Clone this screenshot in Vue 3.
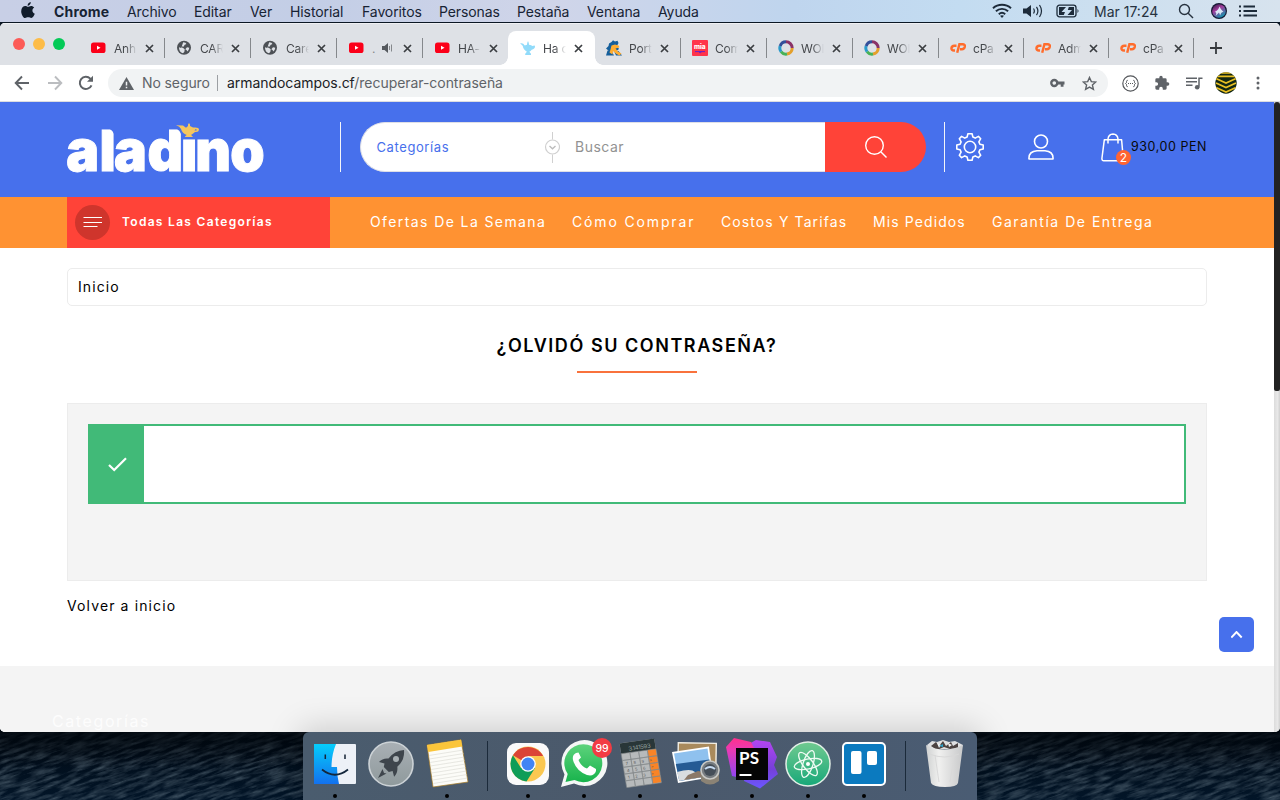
<script setup>
const menus = [
  { t: 'Archivo', w: 67 }, { t: 'Editar', w: 56 }, { t: 'Ver', w: 40 }, { t: 'Historial', w: 72 },
  { t: 'Favoritos', w: 77 }, { t: 'Personas', w: 78 }, { t: 'Pestaña', w: 70 }, { t: 'Ventana', w: 71 }, { t: 'Ayuda', w: 60 }
]
const tabs = [
  { t: 'Anh', i: 'yt' }, { t: 'CAR', i: 'globe' }, { t: 'Care', i: 'globe' }, { t: '.', i: 'yt', sound: true },
  { t: 'HA-', i: 'yt', nosep: true }, { t: 'Ha c', i: 'lamp', active: true }, { t: 'Port', i: 'goat' },
  { t: 'Com', i: 'mia' }, { t: 'WOI', i: 'ring' }, { t: 'WOI', i: 'ring' },
  { t: 'cPa', i: 'cp' }, { t: 'Adm', i: 'cp' }, { t: 'cPa', i: 'cp' }
]
const links = [
  { t: 'Ofertas De La Semana', w: 202, c: 'l1' }, { t: 'Cómo Comprar', w: 149, c: 'l2' },
  { t: 'Costos Y Tarifas', w: 152, c: 'l3' }, { t: 'Mis Pedidos', w: 119, c: 'l4' }, { t: 'Garantía De Entrega', w: 180, c: 'l5' }
]
const calcRows = [0, 1, 2, 3, 4]
const calcCols = [0, 1, 2, 3]
</script>

<template>
  <div class="desktop">
    <svg class="sea" width="1280" height="80" viewBox="0 0 1280 80">
      <defs>
        <filter id="waves" x="0" y="0" width="100%" height="100%">
          <feTurbulence type="fractalNoise" baseFrequency="0.05 0.3" numOctaves="4" seed="8" />
          <feColorMatrix values="0 0 0 0 0.15  0 0 0 0 0.21  0 0 0 0 0.26  1.1 0 0 0 -0.4" />
        </filter>
        <linearGradient id="deep" x1="0" y1="0" x2="0" y2="1">
          <stop offset="0" stop-color="#010a12" /><stop offset=".35" stop-color="#010c18" /><stop offset="1" stop-color="#021528" />
        </linearGradient>
        <linearGradient id="shade" x1="0" y1="0" x2="0" y2="1">
          <stop offset=".15" stop-color="#00060c" stop-opacity=".75" /><stop offset=".6" stop-color="#00060c" stop-opacity="0" />
        </linearGradient>
      </defs>
      <rect width="1280" height="80" fill="url(#deep)" />
      <rect x="-100" y="-500" width="1500" height="1100" filter="url(#waves)" transform="rotate(-18 640 40)" />
      <rect width="1280" height="80" fill="url(#shade)" />
    </svg>

    <div class="menubar">
      <svg class="apple" width="14" height="17" viewBox="0 0 14 17"><path fill="#111c2b" d="M9.8 0c.1 1.9-1.400 3.700-3.200 3.700C6.400 2 8 .2 9.800 0zM7 4.800c.7 0 1.700-.9 3.100-.9 1.200 0 2.400.6 3.100 1.600-2.700 1.600-2.200 5.200.6 6.300-.6 1.700-2 4.200-3.500 4.200-1.200 0-1.600-.7-3.100-.7s-2 .7-3.100.7C2.200 16 .2 12.300.2 9.200c0-3.300 2.100-5.200 4.200-5.200 1.200 0 2 .8 2.600.8z" /></svg>
      <b class="app-name">Chrome</b>
      <span v-for="m in menus" :key="m.t" class="menu" :style="{ width: m.w + 'px' }">{{ m.t }}</span>
      <div class="status">
        <svg width="20" height="16" viewBox="0 0 20 16" fill="none" stroke="#1d2b3a" stroke-width="1.900"><path d="M1 5.200C6 .6 14 .6 19 5.200M3.900 8.300c3.500-3.300 8.700-3.300 12.200 0M6.800 11.300c2-1.800 4.400-1.800 6.400 0" /><path d="M10 15l-2-2.200c1-.9 3-.9 4 0z" fill="#1d2b3a" stroke="none" /></svg>
        <svg class="vol" width="22" height="14" viewBox="0 0 22 14"><path fill="#1d2b3a" d="M1 4.500h3.500L9 1v12L4.500 9.500H1z" /><path d="M11.500 4.500q1.700 2.500 0 5M14.500 2.800q2.800 4.200 0 8.400M17.500 1q4 6 0 12" fill="none" stroke="#1d2b3a" stroke-width="1.200" /></svg>
        <svg class="bat" width="24" height="14" viewBox="0 0 24 14"><rect x="1" y="1.200" width="19" height="11.600" rx="2.500" fill="none" stroke="#1d2b3a" stroke-width="1.300" /><path d="M3 3h7L5.500 8H9l-1.200 3H3zM12.800 3H18v8h-6.500L16 6h-4.200z" fill="#1d2b3a" /><path d="M21.500 5q2 2 0 4z" fill="#1d2b3a" /></svg>
        <span class="clock">Mar 17:24</span>
        <svg class="find" width="16" height="16" viewBox="0 0 16 16" fill="none" stroke="#27323f" stroke-width="1.400"><circle cx="6.500" cy="6.500" r="5" /><path d="M10.200 10.200L15 15" /></svg>
        <svg class="siri" width="16" height="16" viewBox="0 0 16 16"><defs><linearGradient id="sr" x1="0" y1="0" x2=".6" y2="1"><stop stop-color="#24143a" /><stop offset=".45" stop-color="#a23c9c" /><stop offset="1" stop-color="#1792ad" /></linearGradient></defs><circle cx="8" cy="8" r="8" fill="#151833" /><circle cx="8" cy="8" r="6.800" fill="url(#sr)" /><path d="M8.500 3.500q1 3 4 5.500-2.500-.5-3.300 3.500L8 9.500 4.500 13Q6.500 9 3.500 9q4-2 5-5.500z" fill="#e7f7ff" opacity=".9" /></svg>
        <svg width="18" height="12" viewBox="0 0 18 12" stroke="#1d2b3a" stroke-width="1.800"><path d="M0 1.500h2M0 6h2M0 10.500h2M4.500 1.500H16M4.500 6H18M4.500 10.500H18" /></svg>
      </div>
    </div>

    <div class="window">
      <div class="strip">
        <div class="lights"><i class="r"></i><i class="y"></i><i class="g"></i></div>
        <div v-for="(t, n) in tabs" :key="n" class="tab" :class="{ active: t.active, nosep: t.nosep || t.active, slim: n > 9, near: n > 5 && n < 10 }">
          <svg class="fav" width="16" height="16" viewBox="0 0 16 16">
            <template v-if="t.i === 'yt'"><rect x="0" y="2.500" width="14.500" height="10.500" rx="2.600" fill="#fb0019" /><path d="M6 5.800v4l3.500-2z" fill="#fff" /></template>
            <template v-else-if="t.i === 'globe'"><circle cx="7" cy="7.800" r="7" fill="#4d5156" /><path d="M6.200 2.300q3 .2 3.200 1.800l-2 1-.4 1.500H4.500q0 1.400 1.600 1.400l1.600 1.200-.3 2.500-1.400 1.600Q1.800 12 2 7.200l2.200.8M10 7.300l2.300.4q-.5 3-2 3.900-.5-2-2-2.400z" fill="#dee1e6" /></template>
            <template v-else-if="t.i === 'lamp'"><path d="M0 3.500q3-1 4.700 2l2.300-.7L7.200 3 8 1l.8 2 .2 1.700q2.500.5 3.400 1.400Q15 4.500 15 6.500q-.1 2.500-3.300 3.200-1 1.500-2.400 2l1.700 2v1.400H5.200v-1.400l1.700-2Q3.300 9.500 2.800 6 2 4.500 0 3.500z" fill="#91dbfa" /></template>
            <template v-else-if="t.i === 'goat'"><path d="M3 3.500L5.500 2 7 .3 9 1.500l2.500-.8 1 2.300-1.500 3L13 9l-2.500 2H3L0 8.500 2.500 6z" fill="#155f9c" /><path d="M0 15.500l1.500-5L5 10l3 5.500zM10 15.500L8.500 12l4-1L16 15.500z" fill="#155f9c" /><path d="M5.500 5.500L9 4.500l4 1.300.3 1.700L9.500 8.500l2.500 3 3.500 2-2 2-3-1.500-3.500-3-.5 3.500-3-2 1-3z" fill="#ffad31" /></template>
            <template v-else-if="t.i === 'mia'"><rect width="16" height="16" rx="1" fill="#ff344b" /><text x="2" y="9.200" class="mia">mia</text><path d="M3 11.600h10M7 11.600q1.200 3 2.500 0" stroke="#6a21c9" stroke-width="1" fill="none" /></template>
            <template v-else-if="t.i === 'ring'"><g fill="none" stroke-width="3"><path d="M8 1.800a6.200 6.200 0 0 1 6.200 6.200" stroke="#8a3267" /><path d="M14.200 8A6.200 6.200 0 0 1 9 14.100" stroke="#e4a02c" /><path d="M9 14.100A6.200 6.200 0 0 1 3 11.700" stroke="#48b258" /><path d="M3 11.700A6.200 6.200 0 0 1 2.200 6" stroke="#299acb" /><path d="M2.200 6A6.200 6.200 0 0 1 8 1.800" stroke="#334f9a" /></g></template>
            <template v-else><g fill="none" stroke="#ff6c2c" stroke-width="2.400"><path d="M6.500 5.700H4.300q-2.600 0-2.900 2.600.1 2.200 2.500 2.200H5M7.200 12.800L9.400 4.200h3.300q2.300.1 2.200 2.200-.5 2.800-3 2.800h-2" /></g></template>
          </svg>
          <span class="tab-title" :class="{ tiny: t.sound }">{{ t.t }}</span>
          <svg v-if="t.sound" class="snd" width="11" height="10" viewBox="0 0 11 10"><path d="M0 3h2.500L6 0v10L2.500 7H0z" fill="#55595e" /><path d="M7.500 3v4M9.500 1.500v7" stroke="#85888c" /></svg>
          <svg class="x" width="9" height="9" viewBox="0 0 9 9"><path d="M1 1l7 7M8 1L1 8" stroke="#3b3e42" stroke-width="1.700" /></svg>
        </div>
        <svg class="plus" width="12" height="12" viewBox="0 0 12 12"><path d="M6 0v12M0 6h12" stroke="#36393d" stroke-width="1.800" /></svg>
      </div>

      <div class="toolbar">
        <svg class="back" width="16" height="16" viewBox="0 0 16 16" fill="none" stroke="#5f6368" stroke-width="1.900"><path d="M15 8H2M8 1.500L1.700 8 8 14.500" /></svg>
        <svg class="fwd" width="16" height="16" viewBox="0 0 16 16" fill="none" stroke="#bbbdc0" stroke-width="1.900"><path d="M1 8h13M8 1.500L14.300 8 8 14.500" /></svg>
        <svg class="reload" width="16" height="16" viewBox="0 0 16 16"><path d="M13.500 10.300A6.100 6.100 0 1 1 12.300 3.600L14 5.500" fill="none" stroke="#5f6368" stroke-width="2" /><path d="M15 .7v6H9z" fill="#5f6368" /></svg>
        <div class="omnibox">
          <svg width="15" height="13" viewBox="0 0 15 13"><path d="M7.500 0L15 13H0z" fill="#5f6368" /><path d="M7.500 4.800v3.700M7.500 9.800v1.500" stroke="#f1f3f4" stroke-width="1.500" /></svg>
          <span class="insecure">No seguro</span><i class="bar"></i>
          <span class="url"><em>armandocampos.cf</em>/recuperar-contraseña</span>
          <svg class="key" width="15" height="10" viewBox="0 0 15 10"><circle cx="4.300" cy="5" r="3" fill="none" stroke="#5f6368" stroke-width="2.400" /><path d="M7.500 3.500h7v3h-1v2.300h-2.800V6.500H7.500z" fill="#5f6368" /></svg>
          <svg class="star" width="15" height="15" viewBox="0 0 15 15"><path d="M7.500 1.500l1.800 4.100 4.500.4-3.400 3 1 4.400-3.900-2.300-3.900 2.300 1-4.400-3.400-3 4.500-.4z" fill="none" stroke="#5f6368" stroke-width="1.400" /></svg>
        </div>
        <svg class="ext" width="17" height="17" viewBox="0 0 17 17" fill="none" stroke="#55585c"><circle cx="8.500" cy="8.500" r="7.700" stroke-width="1.200" /><path d="M5.700 5.300q-1.200 0-1.200 1.300v1L3.500 8.500l1 .9v1q0 1.300 1.200 1.300M11.300 5.300q1.200 0 1.200 1.300v1l1 .9-1 .9v1q0 1.300-1.200 1.300M6 8.500h1M8 8.500h1M10 8.500h1" /></svg>
        <svg class="puzzle" width="16" height="16" viewBox="0 0 24 24"><path fill="#5f6368" d="M20.500 11H19V7a2 2 0 0 0-2-2h-4V3.500a2.500 2.500 0 0 0-5 0V5H4a2 2 0 0 0-2 2v3.800h1.500a2.700 2.700 0 0 1 0 5.400H2V20a2 2 0 0 0 2 2h3.800v-1.500a2.700 2.700 0 0 1 5.400 0V22H17a2 2 0 0 0 2-2v-4h1.500a2.500 2.500 0 0 0 0-5z" /></svg>
        <svg class="media" width="17" height="13" viewBox="0 0 17 13"><path d="M0 1.300h11M0 4.800h11M0 8.300h6.500M16.500 1.300H13v8.500" stroke="#5f6368" stroke-width="1.500" fill="none" /><circle cx="11.200" cy="10.200" r="2.300" fill="#5f6368" /></svg>
        <svg class="avatar" width="22" height="22" viewBox="0 0 22 22"><defs><clipPath id="av"><circle cx="11" cy="11" r="10.700" /></clipPath></defs><g clip-path="url(#av)"><rect width="22" height="22" fill="#132713" /><path d="M0 .8h22M0 4.300h22M1 6.500l10 4.500 10-4.500M1 11l10 4.500L21 11M1 15.500L11 20l10-4.500" fill="none" stroke="#e8bf23" stroke-width="1.700" /></g></svg>
        <svg class="dots" width="4" height="14" viewBox="0 0 4 14" fill="#5f6368"><circle cx="2" cy="2" r="1.500" /><circle cx="2" cy="7" r="1.500" /><circle cx="2" cy="12" r="1.500" /></svg>
      </div>

      <div class="view">
        <div class="page">
          <header>
            <svg class="logo" width="200" height="54" viewBox="0 0 200 54">
              <text class="logo-text" transform="scale(.965 1)" x="-.7 33.700 48.700 83.400 118.100 133 169.300" y="47.800">aladino</text>
              <rect x="116" y="0" width="14.500" height="15.800" fill="#4770ec" />
              <path d="M38 4q9.500 2 10.200 12H52V2H38zM105.500 4q9 2 9.700 12H117V2h-11.500z" fill="#4770ec" />
              <path d="M109 2.200l7 .3 3 2.300 2-1.700V1.500L122 0l1 1.500v1.600l3 1.500q6-.8 6 2.200-.3 2.700-4 2.200l-2.500 2-1.500 1 1.600 1.300v.8h-7.500v-.8l1.600-1.300Q115.300 10.300 114 6q-1-2.500-5-3.800z" fill="#f5c65f" />
              <path d="M127.500 7.600h2.100q.6-1.500-1.300-1.400z" fill="#4770ec" />
            </svg>
            <i class="vline"></i>
            <div class="search">
              <span class="cat">Categorías</span>
              <svg class="picker" width="16" height="32" viewBox="0 0 16 32" fill="none" stroke="#d0d0d0"><path d="M8.500 1v7.500M8.500 23.500V32" /><circle cx="8.500" cy="16" r="7" stroke-width="1.200" /><path d="M5.500 15l3 2.800 3-2.800" stroke="#bbb" stroke-width="1.300" /></svg>
              <span class="ph">Buscar</span>
            </div>
            <div class="go"><svg width="22" height="22" viewBox="0 0 22 22" fill="none" stroke="#fff" stroke-width="1.400"><circle cx="9.500" cy="9.500" r="8.800" /><path d="M16 16l5.500 5.500" /></svg></div>
            <i class="vline two"></i>
            <svg class="gear" width="28" height="28" viewBox="0 0 28 28" fill="none" stroke="#fff" stroke-width="1.600" stroke-linejoin="round"><path d="M11.900.8h4.200l.8 3.300 2.300 1 3.200-1.700 2.300 2.300-1.800 3.200 1 2.300 3.300.8v4l-3.300.8-1 2.300 1.800 3.200-2.300 2.300-3.200-1.700-2.300 1-.8 3.300h-4.200l-.8-3.300-2.300-1-3.200 1.700-2.300-2.300 1.800-3.200-1-2.300-3.300-.8v-4l3.300-.8 1-2.300-1.800-3.200 2.300-2.300 3.200 1.700 2.300-1z" /><circle cx="14" cy="14" r="5.700" /></svg>
            <svg class="user" width="26" height="27" viewBox="0 0 26 27" fill="none" stroke="#fff" stroke-width="1.600"><circle cx="13" cy="7.500" r="6.500" /><path d="M1 25q-.6-7.500 8-8.200h8q8.600.7 8 8.200z" stroke-linejoin="round" /></svg>
            <div class="cart">
              <svg width="24" height="29" viewBox="0 0 24 29" fill="none" stroke="#fff" stroke-width="1.500"><path d="M3.300 6.800h17.300l1.600 18q.1 3-2.400 3H3Q.9 28 .9 25.500zM7 10.500V6q.5-5 5-5.100 4.500.1 5 5.100v4.500" stroke-linejoin="round" /></svg>
              <span class="count">2</span>
            </div>
            <span class="total">930,00 PEN</span>
          </header>

          <nav>
            <div class="all"><span class="burger"><svg width="19" height="11" viewBox="0 0 19 11"><path d="M.5.5H19M.5 5.500H19M.5 9.500h14" stroke="#fff" /></svg></span><b>Todas Las Categorías</b></div>
            <span v-for="l in links" :key="l.t" class="link" :class="l.c" :style="{ width: l.w + 'px' }">{{ l.t }}</span>
          </nav>

          <main>
            <div class="crumb">Inicio</div>
            <h1>¿OLVIDÓ SU CONTRASEÑA?</h1>
            <section class="panel">
              <div class="alert"><div class="ok"><svg width="19" height="15" viewBox="0 0 19 15"><path d="M1 8l5.200 5L18 1.300" fill="none" stroke="#fff" stroke-width="2.200" /></svg></div></div>
            </section>
            <a class="return">Volver a inicio</a>
          </main>
          <footer><span>Categorías</span></footer>
          <div class="totop"><svg width="12" height="8" viewBox="0 0 12 8"><path d="M.3 6.500L5.500 1l5.200 5.500" fill="none" stroke="#fff" stroke-width="1.900" /></svg></div>
        </div>
        <div class="scroll"><i></i></div>
      </div>
    </div>

    <div class="dock">
      <svg class="ic" viewBox="0 0 56 68"><defs><linearGradient id="fi" x1="0" y1="0" x2="0" y2="1"><stop stop-color="#05cdfb" /><stop offset="1" stop-color="#1371ee" /></linearGradient></defs><rect x="7" y="12" width="42" height="40" rx="1" fill="#edf1f7" /><path d="M7 12h22q-4.500 11-4.500 23H30q0 9 2 17H7z" fill="url(#fi)" /><path d="M18.300 22.500v4.500M38 22.500v4.500" stroke="#152537" stroke-width="1.500" /><path d="M15 37.500q13 10.500 26 0" fill="none" stroke="#14273c" stroke-width="1.700" /><circle cx="28" cy="64" r="2" /></svg>
      <svg class="ic" viewBox="0 0 56 68"><defs><linearGradient id="lp" x1="0" y1="0" x2="0" y2="1"><stop stop-color="#a9b0b5" /><stop offset="1" stop-color="#8f9a9c" /></linearGradient></defs><circle cx="28" cy="32" r="22" fill="url(#lp)" stroke="#ccd2d6" stroke-width="1.600" /><path d="M41 18q-9 .3-15.500 8.500-6-.6-9.500 3.500l5.500 1.500-.7 3.500 5 5 3.800-1 1.500 5.800q4-4 3.200-10Q42 28 41 18zM19.500 37l-4.500 9 8.500-4.500-2.500-.5z" fill="#3e454c" /><circle cx="33" cy="27" r="3" fill="#a9b0b4" /></svg>
      <svg class="ic" viewBox="0 0 56 68"><path d="M8 13L42 7.700 49 50l-35 5z" fill="#fcfcf8" stroke="#a97b22" stroke-width=".7" /><path d="M8 13L42 7.700l1.300 6.800L9.300 20z" fill="#fbc53a" /><path v-for="n in 9" :key="n" :d="`M${9.300 + n * .55} ${20 + n * 3.500}l34-5.400`" stroke="#d9d8d2" stroke-width=".6" /><circle cx="28" cy="64" r="2" /></svg>
      <i class="sep"></i>
      <svg class="ic" viewBox="0 0 56 68"><rect x="7" y="11" width="42" height="42" rx="9" fill="#fafafa" /><circle cx="28" cy="32" r="17.500" fill="#fbc851" /><path d="M28 32L12.900 23.200A17.500 17.500 0 0 1 43.100 24H28z" fill="#db4437" /><path d="M12.900 23.200A17.500 17.500 0 0 0 26.500 49.500L35 36 28 32 21 36z" fill="#0f9d58" /><circle cx="28" cy="32" r="7.800" fill="#fff" /><circle cx="28" cy="32" r="6.500" fill="#4285f4" /><circle cx="28" cy="64" r="2" /></svg>
      <svg class="ic" viewBox="0 0 56 68"><defs><linearGradient id="wa" x1="0" y1="0" x2="0" y2="1"><stop stop-color="#5dd37c" /><stop offset="1" stop-color="#18b34c" /></linearGradient></defs><path d="M5 55l3.500-12.500A23 23 0 1 1 18 51.500z" fill="#f5f7f6" /><path d="M9.500 50l2.200-8A19 19 0 1 1 18.500 48z" fill="url(#wa)" /><path d="M20 21q-4 2-3 7 3 11 14 15 7 1.800 9-4v-2l-6-3.500-3 3q-6-2-8.500-8.500l2.500-2.500-2.500-5z" fill="#fff" /><circle cx="46" cy="16" r="10" fill="#f23c43" /><text x="46" y="20" class="badge">99</text><circle cx="28" cy="64" r="2" /></svg>
      <svg class="ic" viewBox="0 0 56 68"><g transform="matrix(.99 -.14 .16 .98 7.500 11.500)"><rect width="35" height="45" rx="1" fill="#b7babb" /><rect width="35" height="10.500" fill="#293638" /><rect x="26.500" y="10.500" width="8.500" height="34" fill="#f98427" /><text x="8" y="8.500" class="lcd">3.141593</text><template v-for="r in calcRows" :key="r"><rect v-for="c in calcCols" :key="c" :x="c * 8.800" :y="10.500 + r * 6.900" width="8.800" height="6.900" fill="none" stroke="#84888a" stroke-width=".6" /></template><text x="3" y="22.500" class="keys">7 8 9 ×</text><text x="3" y="29.500" class="keys">4 5 6 −</text><text x="3" y="36.500" class="keys">1 2 3 +</text></g><circle cx="28" cy="64" r="2" /></svg>
      <svg class="ic" viewBox="0 0 56 68"><rect x="10" y="11" width="38" height="34" fill="#a98a5c" stroke="#f2eee4" stroke-width="1.400" transform="rotate(1 29 28)" /><path d="M4 20L41 14.500 45 45 10 51z" fill="#fff" /><path d="M6 21.500l33.500-5L43 43.500 11.300 49z" fill="#8fc1ee" /><path d="M7.800 32l33.700-4.500 2 16L11.300 49z" fill="#255b94" /><path d="M9 40q14-4 18 0t15-4l1.400 7.600L11.300 49z" fill="#d9dde0" /><path d="M20 43l10-4 12 2 1 2.700L16 48z" fill="#8b7867" /><path d="M33 38v11q9 7 18 0V38z" fill="#8b8375" /><circle cx="42" cy="38" r="9" fill="#777c80" stroke="#c8c8c4" stroke-width="1.600" /><circle cx="42" cy="38" r="6" fill="#454e58" /><path d="M37 37q5-4 10 0" stroke="#c8dcf2" fill="none" stroke-width="2" /><circle cx="28" cy="64" r="2" /></svg>
      <svg class="ic" viewBox="0 0 56 68"><defs><linearGradient id="p1" x1="0" y1="0" x2="0" y2="1"><stop stop-color="#ff318c" /><stop offset=".3" stop-color="#e93ab4" /><stop offset="1" stop-color="#8e46f4" /></linearGradient><linearGradient id="p2" x1="0" y1="0" x2="0" y2="1"><stop stop-color="#b345f1" /><stop offset=".6" stop-color="#7540d8" /><stop offset="1" stop-color="#6b57ff" /></linearGradient></defs><path d="M23 13l9-5 14 2 7 15-3 8 4 9-18 14.500L20 49z" fill="url(#p2)" /><path d="M2 15l8-9 17 4 4 8-14 28-9-2z" fill="url(#p1)" /><rect x="12" y="16" width="32" height="32" fill="#050505" /><text x="15" y="31.500" class="ps">PS</text><path d="M15.500 43h12" stroke="#fff" stroke-width="2" /><circle cx="28" cy="64" r="2" /></svg>
      <svg class="ic" viewBox="0 0 56 68"><defs><linearGradient id="at" x1="0" y1="0" x2="0" y2="1"><stop stop-color="#70ca90" /><stop offset="1" stop-color="#18a879" /></linearGradient></defs><circle cx="28" cy="32" r="22" fill="url(#at)" stroke="#e1eee6" stroke-width="1.500" /><g fill="none" stroke="#effbf3" stroke-width="1.300"><ellipse cx="28" cy="32" rx="14" ry="5" transform="rotate(-12 28 32)" /><ellipse cx="28" cy="32" rx="14" ry="5" transform="rotate(53 28 32)" /><ellipse cx="28" cy="32" rx="14" ry="5" transform="rotate(108 28 32)" /></g><circle cx="28" cy="32" r="2" fill="#fff" /><circle cx="28" cy="64" r="2" /></svg>
      <svg class="ic" viewBox="0 0 56 68"><rect x="7" y="11" width="42" height="42" rx="4" fill="#0b7abf" stroke="#fff" stroke-width="2" /><rect x="15" y="19" width="10.500" height="23" rx="2" fill="#fff" /><rect x="31" y="19" width="10" height="14" rx="2" fill="#fff" /><circle cx="28" cy="64" r="2" /></svg>
      <i class="sep last"></i>
      <svg class="ic" viewBox="0 0 56 68"><defs><linearGradient id="tr" x1="0" y1="0" x2="1" y2="0"><stop stop-color="#cfd1d1" /><stop offset=".35" stop-color="#f0f0ef" /><stop offset="1" stop-color="#c8c9ca" /></linearGradient></defs><path d="M10 13l5-4 5 1 6-2 6 2 6-1 8 4-2 4H12z" fill="#dfe0e2" /><path d="M14 14l5-4 3 4 4-5 3 5 5-4 2 4 5-3v5l-8 1-6-2-7 3z" fill="#4c4342" /><path d="M20 11l4 2-2 3zM31 11l4 2-3 2z" fill="#f3f3f3" /><path d="M22 14l4-2v3z" fill="#28a1c9" /><path d="M9 13q18 9 37 0l-5 38q-1 4-13 4t-14-4z" fill="url(#tr)" /><path d="M12 22q16 6 30 0M18 23l4 27M37 24l-4 26" fill="none" stroke="#d9d9d9" /></svg>
    </div>
  </div>
</template>

<style>
html, body { margin: 0; overflow: hidden; }
</style>
<style scoped>
.desktop { position: relative; width: 1280px; height: 800px; overflow: hidden; background: #0b1724; font-family: Inter, "Liberation Sans", sans-serif; }
.desktop * { box-sizing: border-box; }
svg { display: block; flex: none; }
i { display: block; flex: none; }
span, b, a { white-space: nowrap; }
.sea { position: absolute; left: 0; bottom: 0; }
.menubar { position: relative; display: flex; align-items: center; height: 22px; padding-left: 21px; background: linear-gradient(90deg, #c8cfe6 0, #c3cee6 25%, #d0d5e9 43%, #bfd5ee 62%, #c3dcf1 75%, #d7e3ee 100%); font-size: 14px; color: #172334; }
.apple { margin-top: -2px; }
.app-name { width: 73px; margin-left: 19px; letter-spacing: .2px; font-weight: 700; }
.menu { flex: none; letter-spacing: -.1px; }
.status { display: flex; align-items: center; margin-left: auto; padding-right: 23px; }
.vol { margin-left: 10px; }
.bat { margin-left: 12px; }
.clock { width: 63px; margin-left: 14px; letter-spacing: 0; color: #27323f; }
.find { margin-left: 21px; }
.siri { margin: 0 12px 0 17px; }
.window { position: relative; height: 709px; margin-top: 1px; overflow: hidden; border-radius: 5px; background: #fff; }
.strip { display: flex; height: 42px; background: #dee1e6; border-top: 1px solid #eff0f3; }
.lights { display: flex; flex: none; gap: 8px; width: 79px; padding: 14px 0 0 13px; }
.lights i { width: 12px; height: 12px; border-radius: 50%; }
.r { background: #fc5b57; } .y { background: #fdbc48; } .g { background: #04ca57; }
.tab { position: relative; display: flex; flex: none; align-items: center; width: 86px; height: 34px; margin-top: 7px; padding-left: 12px; font-size: 12px; color: #44474b; }
.tab.slim { width: 85px; padding-left: 11px; }
.tab.near { padding-left: 11px; }
.tab::after { content: ""; width: 1px; height: 20px; margin-left: auto; background: #85888c; }
.tab.nosep::after { visibility: hidden; }
.tab.active { margin-left: -1px; width: 87px; background: #fff; border-radius: 8px 8px 0 0; }
.tab.active::before { content: ""; position: absolute; left: -8px; right: -8px; bottom: 0; height: 8px; background: radial-gradient(circle at 0 0, transparent 7.500px, #fff 8px) left / 8px 8px no-repeat, radial-gradient(circle at 100% 0, transparent 7.500px, #fff 8px) right / 8px 8px no-repeat; }
.tab-title { width: 23px; margin-left: 7px; letter-spacing: -.2px; mask-image: linear-gradient(90deg, #000 50%, transparent 100%); }
.tab-title.tiny { width: 5px; mask-image: none; color: #888; }
.snd { margin: 0 2px 0 5px; }
.x { margin-left: 8px; }
.mia { font: 800 6.500px Inter, sans-serif; fill: #fff; letter-spacing: -.1px; }
.plus { margin: 18px 0 0 16px; }
.toolbar { display: flex; align-items: center; height: 37px; padding-left: 14px; border-bottom: 1px solid #dcdde0; background: #fff; }
.fwd { margin-left: 17px; }
.reload { margin: 0 14px 0 15px; }
.omnibox { display: flex; flex: none; align-items: center; width: 1000px; height: 28px; padding: 0 11px; border-radius: 14px; background: #f1f3f4; font-size: 14px; color: #5f6368; }
.insecure { width: 68px; margin-left: 8px; margin-top: -1px; letter-spacing: -.1px; }
.bar { width: 1px; height: 16px; margin: 0 9px 0 7px; background: #9c9fa3; }
.url { margin-top: -1px; letter-spacing: -.05px; }
.url em { font-style: normal; color: #202124; }
.key { margin-left: auto; }
.star { margin-left: 17px; }
.ext { margin-left: 14px; }
.puzzle { margin-left: 15px; }
.media { margin-left: 16px; }
.avatar { margin-left: 12px; }
.dots { margin-left: 19px; }
.view { display: flex; height: 630px; }
.page { position: relative; width: 1274px; height: 630px; background: #fff; }
.scroll { width: 6px; background: linear-gradient(90deg, #dcdcdc, #e8e8e8 60%, #d0d0d0); }
.scroll i { height: 289px; border-radius: 3px 3px 2px 2px; background: #222; }
header { display: flex; height: 95px; padding: 20px 0 0 67px; background: #4770ec; }
.logo { margin-top: 1px; overflow: visible; }
.logo-text { font: 900 57px Inter, sans-serif; fill: #fff; stroke: #fff; stroke-width: 1px; }
.vline { width: 1px; height: 50px; margin-left: 73px; background: #f4f5f9; }
.vline.two { margin-left: 18px; }
.search { display: flex; align-items: center; flex: none; width: 465px; height: 50px; margin-left: 19px; padding-left: 15.500px; border: 1px solid #dedfe6; border-right: 0; border-radius: 25px 0 0 25px; background: #fff; color: #929292; }
.cat { width: 167.500px; margin-top: -1px; font-size: 13px; letter-spacing: .6px; color: #4770ec; }
.picker { margin-top: -1px; }
.ph { margin-top: -1px; margin-left: 15px; font-size: 14px; letter-spacing: .5px; }
.go { display: flex; align-items: center; justify-content: center; flex: none; width: 101px; height: 50px; border-radius: 0 25px 25px 0; background: #ff4338; }
.gear { margin: 11px 0 0 11px; }
.user { margin: 12px 0 0 44px; }
.cart { position: relative; width: 24px; height: 29px; margin: 11px 0 0 47px; }
.count { position: absolute; left: 15px; top: 17px; width: 15px; height: 15px; border-radius: 50%; background: #ff6432; font-size: 12px; line-height: 15px; text-align: center; color: #fff; }
.total { margin: 16px 0 0 6px; font-size: 12.500px; line-height: 18px; letter-spacing: .55px; color: #080808; }
nav { display: flex; align-items: center; height: 51px; padding-left: 67px; background: #ff9232; color: #fff; }
.all { display: flex; align-items: center; flex: none; width: 263px; height: 51px; margin-right: 40px; padding-left: 8px; background: #ff4338; }
.burger { display: flex; align-items: center; justify-content: center; width: 35px; height: 35px; margin-right: 12px; border-radius: 50%; background: #cf352c; }
.all b { margin-top: -2px; font-size: 12px; font-weight: 600; letter-spacing: 1.300px; }
.link { flex: none; font-size: 14px; letter-spacing: 1.200px; margin-top: -3px; }
.l1 { letter-spacing: 1.400px; } .l2 { letter-spacing: 1.850px; } .l3, .l4 { letter-spacing: 1.100px; } .l5 { letter-spacing: 1.520px; }
main { padding: 20px 67px 0; width: 1274px; height: 418px; }
.crumb { height: 38px; padding-left: 10px; border: 1px solid #ececec; border-radius: 5px; font-size: 14px; line-height: 36px; letter-spacing: 1.100px; color: #000; }
h1 { position: relative; height: 67px; margin: 0 0 30px; font-size: 18px; font-weight: 600; line-height: 79px; letter-spacing: 1.550px; text-align: center; color: #000; }
h1::after { content: ""; position: absolute; left: 510px; bottom: 0; width: 120px; height: 2px; background: #f9723c; }
.panel { height: 178px; padding: 20px; border: 1px solid #ececec; background: #f4f4f4; }
.alert { height: 80px; border: 2px solid #41ba78; background: #fff; }
.ok { display: flex; align-items: center; justify-content: center; width: 54px; height: 76px; background: #41ba78; padding-left: 1px; }
.return { display: block; margin-top: 14px; font-size: 14px; line-height: 22px; letter-spacing: 1.120px; color: #000; }
footer { height: 66px; padding: 43px 0 0 52px; background: #f4f4f4; font-size: 16px; line-height: 24px; letter-spacing: 1.600px; color: #fdfdfd; }
.totop { position: absolute; left: 1219px; top: 515px; display: flex; align-items: center; justify-content: center; width: 35px; height: 35px; border-radius: 5px; background: #4770ec; }
.dock { position: absolute; left: 303px; top: 732px; display: flex; width: 674px; height: 68px; padding-left: 4px; border-radius: 6px 6px 0 0; background: linear-gradient(90deg, #4a5c6e, #4b596b 50%, #4a5c73); box-shadow: 0 0 32px 4px rgba(0, 0, 0, .17); }
.ic { width: 56px; height: 68px; overflow: visible; }
.sep { width: 1px; height: 50px; margin: 9px 12px 0; background: #1b2a3a; }
.sep.last { margin: 9px 11px 0 13px; }
.badge { font: 500 10.500px Inter, sans-serif; fill: #fff; text-anchor: middle; }
.lcd { font: 6px Inter, sans-serif; fill: #94a09e; letter-spacing: -.3px; }
.keys { font: 4px Inter, sans-serif; fill: #555; word-spacing: 4.500px; }
.ps { font: 700 17px Lato, sans-serif; fill: #fff; letter-spacing: .3px; }
</style>
